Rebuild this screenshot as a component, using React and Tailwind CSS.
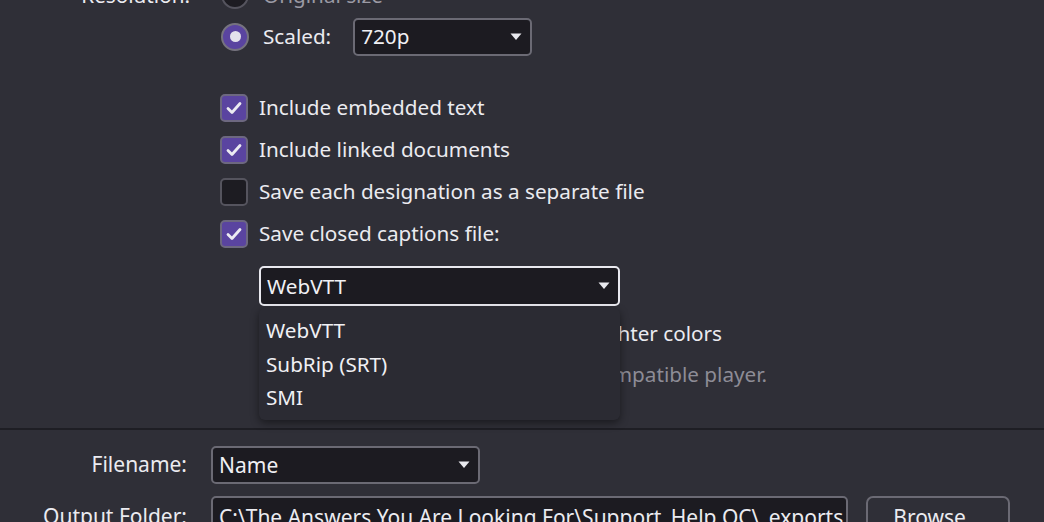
const FONT = { fontFamily: '"Noto Sans", "Open Sans", sans-serif' }

function Radio({ checked }) {
  return (
    <div
      className={
        'w-[28px] h-[28px] rounded-full border-2 flex items-center justify-center shrink-0 ' +
        (checked ? 'bg-[#5a44a0] border-[#76737f]' : 'bg-[#1d1c22] border-[#55545e]')
      }
    >
      {checked && <div className="w-[11px] h-[11px] rounded-full bg-[#e4e2ec]" />}
    </div>
  )
}

function Checkbox({ checked }) {
  return (
    <div
      className={
        'w-[28px] h-[28px] rounded-[5px] border-2 flex items-center justify-center shrink-0 ' +
        (checked ? 'bg-[#5a44a0] border-[#6d6880]' : 'bg-[#1d1c22] border-[#55545e]')
      }
    >
      {checked && (
        <svg width="16" height="14" viewBox="0 0 16 14">
          <path d="M2 7.5 L6 11.5 L14 2.5" fill="none" stroke="#ecebf2" strokeWidth="2.8" strokeLinecap="round" strokeLinejoin="round" />
        </svg>
      )}
    </div>
  )
}

function Caret() {
  return (
    <svg width="12" height="8" viewBox="0 0 12 8" className="shrink-0">
      <path d="M0.5 0.5 H11.5 L6 7 Z" fill="#e8e8ee" />
    </svg>
  )
}

function Select({ value, className, focused, text = 'text-[20.7px]' }) {
  return (
    <div
      className={
        'flex items-center justify-between bg-[#1c1b21] rounded-[5px] border-2 pl-[6px] pr-[8px] ' +
        (focused ? 'border-[#e9e9ef]' : 'border-[#6b6a74]') +
        ' ' +
        className
      }
    >
      <span className={'text-[#f0f0f4] leading-none ' + text}>{value}</span>
      <Caret />
    </div>
  )
}

const OPTIONS = [
  { label: 'Include embedded text', checked: true },
  { label: 'Include linked documents', checked: true },
  { label: 'Save each designation as a separate file', checked: false },
  { label: 'Save closed captions file:', checked: true },
]

export default function App() {
  return (
    <div className="w-[1044px] h-[522px] overflow-hidden bg-[#2f2f37] text-[#ebebf0] flex flex-col text-[20.7px]" style={FONT}>
      {/* top section */}
      <div className="h-[428px] shrink-0 flex flex-col">
        <div className="flex items-center h-[41px] mt-[-25px]">
          <div className="w-[190px] text-right">Resolution:</div>
          <div className="ml-[31px] flex items-center gap-[14px]">
            <Radio />
            <span className="text-[#9b9aa4]">Original size</span>
          </div>
        </div>
        <div className="flex items-center h-[41px]">
          <div className="ml-[221px] flex items-center">
            <Radio checked />
            <span className="ml-[14px]">Scaled:</span>
            <Select value="720p" className="ml-[22px] w-[179px] h-[38px]" />
          </div>
        </div>

        <div className="ml-[220px] mt-[30px] flex flex-col">
          {OPTIONS.map((o) => (
            <div key={o.label} className="flex items-center h-[42px] gap-[11px]">
              <Checkbox checked={o.checked} />
              <span>{o.label}</span>
            </div>
          ))}
        </div>

        <div className="ml-[259px] mt-[11px] relative">
          <Select value="WebVTT" focused className="w-[361px] h-[40px]" />
          <div className="mt-[8px] flex items-center justify-between h-[40px] w-[463px]">
            <Checkbox />
            <span>Display captions with lighter colors</span>
          </div>
          <div className="mt-[5px] w-[508px] text-right text-[#8d8c96]">
            Requires a WebVTT-compatible player.
          </div>

          {/* dropdown menu */}
          <div className="absolute left-0 top-[42px] w-[361px] h-[112px] bg-[#2b2b33] rounded-[6px] shadow-[0_3px_8px_rgba(0,0,0,0.45)] flex flex-col pt-[6px] px-[7px]">
            <div className="h-[33.5px] flex items-center text-[#f0f0f4]">WebVTT</div>
            <div className="h-[33.5px] flex items-center text-[#f0f0f4]">SubRip (SRT)</div>
            <div className="h-[33.5px] flex items-center text-[#f0f0f4]">SMI</div>
          </div>
        </div>
      </div>

      {/* bottom section */}
      <div className="flex-1 border-t-2 border-[#1e1e24] bg-[#2f2f37] flex flex-col pt-[16px] text-[21px]">
        <div className="flex items-center h-[38px]">
          <div className="w-[187px] text-right">Filename:</div>
          <Select value="Name" text="text-[21px]" className="ml-[24px] w-[269px] h-[38px]" />
        </div>
        <div className="flex items-start mt-[12px]">
          <div className="w-[187px] text-right pt-[5px]">Output Folder:</div>
          <div className="ml-[24px] w-[637px] h-[40px] bg-[#1c1b21] border-2 border-[#6b6a74] rounded-[5px] px-[6px] pt-[4px] whitespace-nowrap overflow-hidden">
            C:\The Answers You Are Looking For\Support_Help OC\_exports
          </div>
          <div className="ml-[18px] w-[144px] h-[40px] border-2 border-[#6b6a74] rounded-[7px] bg-[#2f2f37] flex justify-center pt-[4px]">
            Browse...
          </div>
        </div>
      </div>
    </div>
  )
}
